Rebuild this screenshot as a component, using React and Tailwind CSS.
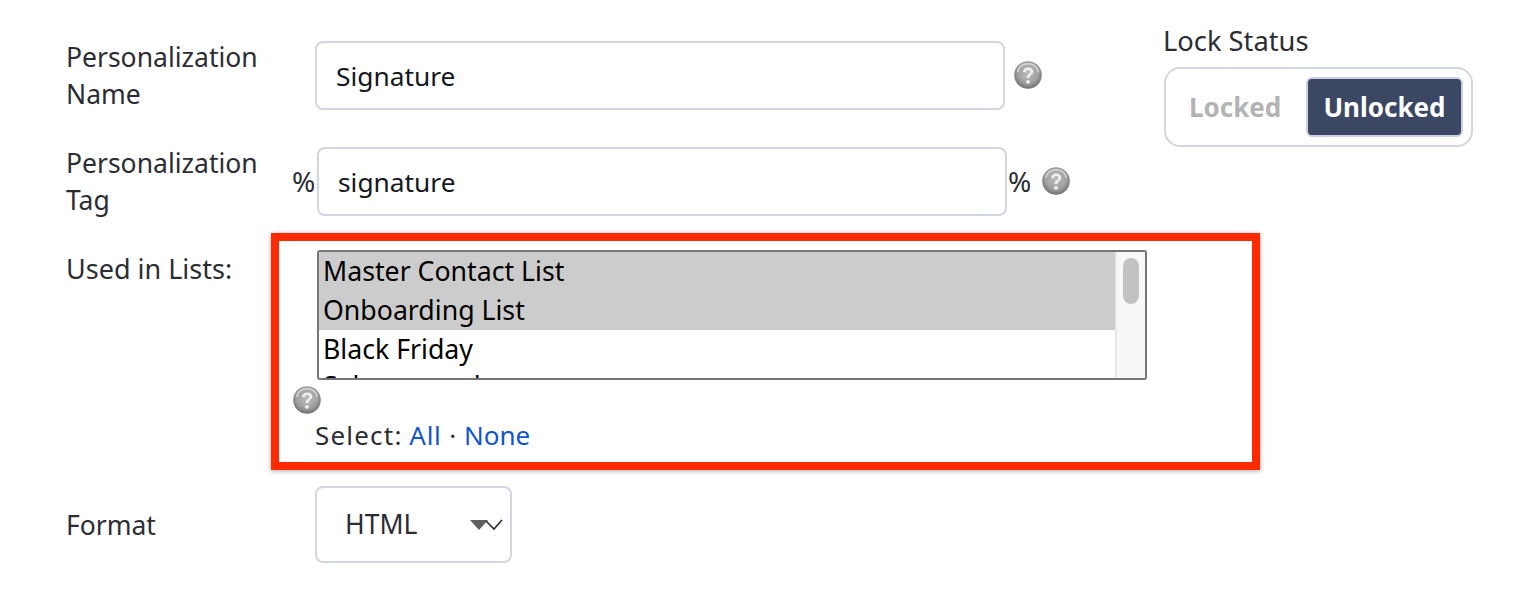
const font = "font-['Noto_Sans','Open_Sans',sans-serif]";

function Help() {
  return (
    <svg width="28" height="28" viewBox="0 0 28 28" className="block shrink-0">
      <defs>
        <radialGradient id="helpFill" cx="0.5" cy="0.42" r="0.62">
          <stop offset="0" stopColor="#bdbdbd" />
          <stop offset="0.6" stopColor="#a2a2a2" />
          <stop offset="1" stopColor="#666666" />
        </radialGradient>
      </defs>
      <circle cx="14" cy="14" r="13.800" fill="url(#helpFill)" />
      <path d="M3.500 11C5 5.500 9 2.800 14 2.800S23 5.500 24.500 11" fill="none" stroke="#d6d6d6" strokeWidth="1.500" />
      <path d="M9 11c.3-3 2.500-4.600 5.200-4.600 3 0 5.100 1.700 5.100 4.200 0 3.300-3.800 3.400-3.900 6.500h-2.800c-.1-3.700 3.700-4 3.700-6.300 0-1-.8-1.700-2.100-1.700-1.300 0-2.200.8-2.400 2.100z" fill="#f0f0f0" />
      <circle cx="14" cy="20.800" r="1.900" fill="#f0f0f0" />
    </svg>
  );
}

function Label({ children, className = "" }) {
  return <div className={`text-[26.500px] leading-[37px] text-[#2b2d33] ${className}`}>{children}</div>;
}

function TextBox({ value }) {
  return (
    <div className="h-[69px] w-[690px] shrink-0 rounded-[8px] border-2 border-[#d3d5e0] bg-white pl-[19px] text-[26.300px] leading-[66px] text-[#15171c]">
      {value}
    </div>
  );
}

export default function App() {
  return (
    <div className={`${font} h-[602px] w-[1534px] overflow-hidden bg-white pl-[66px] pt-[20px]`}>
      <div className="flex items-start">
        <div className="w-[1098px] shrink-0">
          <div className="mt-[21px] flex items-start">
            <Label className="-mt-[2px] w-[249px] shrink-0">Personalization<br />Name</Label>
            <TextBox value="Signature" />
            <div className="ml-[9px] mt-[20px]"><Help /></div>
          </div>
          <div className="mt-[34px] flex items-start">
            <Label className="-mt-[2px] w-[226px] shrink-0">Personalization<br />Tag</Label>
            <div className="mt-[16px] w-[25px] shrink-0 text-[28px] leading-[37px] text-[#2b2d33]">%</div>
            <TextBox value="signature" />
            <div className="ml-[1px] mt-[16px] w-[34px] shrink-0 text-[28px] leading-[37px] text-[#2b2d33]">%</div>
            <div className="mt-[20px]"><Help /></div>
          </div>
        </div>
        <div className="mt-[2px] w-[309px] shrink-0">
          <div className="mb-[8px] -ml-[1px] text-[27.300px] leading-[37px] text-[#2b2d33]">Lock Status</div>
          <div className="flex h-[80px] items-center justify-between rounded-[16px] border-2 border-[#d3d5e0] bg-white pl-[23px] pr-[8px]">
            <span className="text-[26px] font-bold text-[#b3b3b3]">Locked</span>
            <span className="flex h-[60px] w-[157px] items-center justify-center rounded-[6px] border-2 border-[#c9d1e3] bg-[#3b4763] text-[26px] font-bold text-white">Unlocked</span>
          </div>
        </div>
      </div>

      <div className="mt-[14px] flex items-start">
        <div className="mt-[17px] w-[205px] shrink-0 text-[27px] leading-[37px] text-[#2b2d33]">Used in Lists:</div>
        <div className="h-[237px] w-[989px] border-8 border-[#ff2a00] bg-white shadow-[0_1px_5px_rgba(0,0,0,0.35)]">
          <div className="ml-[38px] mt-[9px] flex h-[130px] w-[830px] overflow-hidden rounded-[3px] border-2 border-[#767676] bg-white">
            <div className="h-full min-w-0 flex-1 overflow-hidden text-[26.700px] leading-[39px] text-black">
              <div className="bg-[#cccccc] pl-[4px]"><span className="block -translate-y-[1px]">Master Contact List</span></div>
              <div className="bg-[#cccccc] pl-[4px]"><span className="block -translate-y-[1px]">Onboarding List</span></div>
              <div className="pl-[4px]"><span className="block -translate-y-[1px]">Black Friday</span></div>
              <div className="-mt-[3px] pl-[4px]">Sales annual</div>
            </div>
            <div className="h-full w-[30px] shrink-0 border-l-2 border-[#e8e8e8] bg-[#f8f8f8] pl-[6px] pt-[6px]">
              <div className="h-[46px] w-[16px] rounded-full bg-[#c2c2c2]" />
            </div>
          </div>
          <div className="ml-[14px] mt-[6px]"><Help /></div>
          <div className="ml-[36px] mt-[3px] text-[26px] leading-[37px] text-[#2b2d33]">
            <span className="tracking-[1.200px]">Select:</span> <span className="tracking-[0.700px] text-[#1155cc]">All</span> <span className="px-[1px]">·</span> <span className="text-[#1155cc]">None</span>
          </div>
        </div>
      </div>

      <div className="mt-[16px] flex items-start">
        <Label className="mt-[21px] w-[249px] shrink-0">Format</Label>
        <div className="flex h-[77px] w-[197px] items-center justify-between rounded-[8px] border-2 border-[#d3d5e0] bg-white pl-[28px] pr-[7px] text-[26.600px] text-[#2b2d33]">
          <span>HTML</span>
          <svg width="33" height="14" viewBox="0 0 33 14" className="shrink-0">
            <path d="M0 2h18l-9 10z" fill="#5f5f5f" />
            <path d="M16 3l8 8 8-9" fill="none" stroke="#2b2d33" strokeWidth="1.600" />
          </svg>
        </div>
      </div>
    </div>
  );
}
